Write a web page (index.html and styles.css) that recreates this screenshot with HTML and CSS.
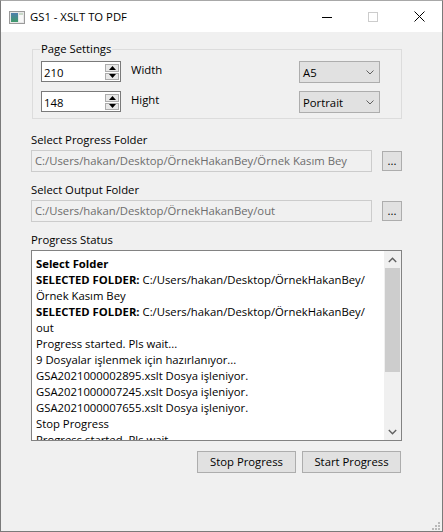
FILE: index.html
```html
<!DOCTYPE html>
<html lang="tr">
<head>
<meta charset="utf-8">
<title>GS1 - XSLT TO PDF</title>
<link rel="stylesheet" href="styles.css">
</head>
<body>
<div class="window">
  <div class="titlebar">
    <svg class="app-icon" width="16" height="13" viewBox="0 0 16 13">
      <defs>
        <linearGradient id="g1" x1="0" y1="0" x2="0" y2="1">
          <stop offset="0" stop-color="#4f7fae"/>
          <stop offset="1" stop-color="#3f9a6a"/>
        </linearGradient>
      </defs>
      <rect x="0.5" y="0.5" width="15" height="12" fill="#e8e8e8" stroke="#9a9a9a"/>
      <rect x="2" y="2" width="7" height="9" fill="url(#g1)"/>
      <rect x="10" y="2" width="4" height="9" fill="#f7f7f7"/>
      <rect x="10" y="2" width="4" height="2" fill="#c9d9c9"/>
    </svg>
    <span class="title">GS1 - XSLT TO PDF</span>
    <div class="caption-buttons">
      <span class="cap"><svg width="10" height="10" viewBox="0 0 10 10"><line x1="0" y1="5.5" x2="10" y2="5.5" stroke="#000" stroke-width="1"/></svg></span>
      <span class="cap"><svg width="10" height="10" viewBox="0 0 10 10"><rect x="0.5" y="0.5" width="9" height="9" fill="none" stroke="#cccccc" stroke-width="1"/></svg></span>
      <span class="cap"><svg width="11" height="11" viewBox="0 0 11 11"><path d="M0.5 0.5 L10.5 10.5 M10.5 0.5 L0.5 10.5" stroke="#000" stroke-width="1" fill="none"/></svg></span>
    </div>
  </div>

  <div class="client">
    <fieldset class="group">
      <legend>Page Settings</legend>
      <div class="settings-grid">
        <div class="spin">
          <span class="spin-value">210</span>
          <span class="spin-btns">
            <span class="spin-btn"><svg width="7" height="4" viewBox="0 0 7 4"><path d="M0 4 L3.5 0 L7 4 Z" fill="#000"/></svg></span>
            <span class="spin-btn"><svg width="7" height="4" viewBox="0 0 7 4"><path d="M0 0 L3.5 4 L7 0 Z" fill="#000"/></svg></span>
          </span>
        </div>
        <span class="field-label">Width</span>
        <div class="combo"><span>A5</span><svg width="8" height="5" viewBox="0 0 8 5"><path d="M0.5 0.5 L4 4 L7.5 0.5" stroke="#606060" fill="none"/></svg></div>

        <div class="spin">
          <span class="spin-value">148</span>
          <span class="spin-btns">
            <span class="spin-btn"><svg width="7" height="4" viewBox="0 0 7 4"><path d="M0 4 L3.5 0 L7 4 Z" fill="#000"/></svg></span>
            <span class="spin-btn"><svg width="7" height="4" viewBox="0 0 7 4"><path d="M0 0 L3.5 4 L7 0 Z" fill="#000"/></svg></span>
          </span>
        </div>
        <span class="field-label">Hight</span>
        <div class="combo"><span>Portrait</span><svg width="8" height="5" viewBox="0 0 8 5"><path d="M0.5 0.5 L4 4 L7.5 0.5" stroke="#606060" fill="none"/></svg></div>
      </div>
    </fieldset>

    <div class="label first">Select Progress Folder</div>
    <div class="path-row">
      <div class="textbox">C:/Users/hakan/Desktop/ÖrnekHakanBey/Örnek Kasım Bey</div>
      <button class="browse">...</button>
    </div>

    <div class="label">Select Output Folder</div>
    <div class="path-row">
      <div class="textbox">C:/Users/hakan/Desktop/ÖrnekHakanBey/out</div>
      <button class="browse">...</button>
    </div>

    <div class="label">Progress Status</div>
    <div class="log">
      <div class="log-text">
        <div class="line"><b>Select Folder</b></div>
        <div class="line"><b>SELECTED FOLDER:</b> C:/Users/hakan/Desktop/ÖrnekHakanBey/</div>
        <div class="line">Örnek Kasım Bey</div>
        <div class="line"><b>SELECTED FOLDER:</b> C:/Users/hakan/Desktop/ÖrnekHakanBey/</div>
        <div class="line">out</div>
        <div class="line">Progress started. Pls wait...</div>
        <div class="line">9 Dosyalar işlenmek için hazırlanıyor...</div>
        <div class="line">GSA2021000002895.xslt Dosya işleniyor.</div>
        <div class="line">GSA2021000007245.xslt Dosya işleniyor.</div>
        <div class="line">GSA2021000007655.xslt Dosya işleniyor.</div>
        <div class="line">Stop Progress</div>
        <div class="line">Progress started. Pls wait...</div>
      </div>
      <div class="scrollbar">
        <span class="sb-arrow"><svg width="9" height="6" viewBox="0 0 9 6"><path d="M0.8 5 L4.5 1.3 L8.2 5" stroke="#606060" stroke-width="1.4" fill="none"/></svg></span>
        <span class="sb-track"><span class="sb-thumb"></span></span>
        <span class="sb-arrow"><svg width="9" height="6" viewBox="0 0 9 6"><path d="M0.8 1 L4.5 4.7 L8.2 1" stroke="#606060" stroke-width="1.4" fill="none"/></svg></span>
      </div>
    </div>

    <div class="actions">
      <button class="btn">Stop Progress</button>
      <button class="btn">Start Progress</button>
    </div>
  </div>

  <svg class="grip" width="8" height="8" viewBox="0 0 8 8">
    <rect x="6" y="0" width="2" height="2" fill="#b9b9b9"/>
    <rect x="3" y="3" width="2" height="2" fill="#b9b9b9"/>
    <rect x="6" y="3" width="2" height="2" fill="#b9b9b9"/>
    <rect x="0" y="6" width="2" height="2" fill="#b9b9b9"/>
    <rect x="3" y="6" width="2" height="2" fill="#b9b9b9"/>
    <rect x="6" y="6" width="2" height="2" fill="#b9b9b9"/>
  </svg>
</div>
</body>
</html>
```

FILE: styles.css
```css
* {
  box-sizing: border-box;
}

html, body {
  margin: 0;
  padding: 0;
  background: #ffffff;
}

.window {
  position: relative;
  width: 443px;
  height: 532px;
  border: 1px solid #7a7a7a;
  border-top-color: #a8a8a8;
  background: #f0f0f0;
  display: flex;
  flex-direction: column;
  font-family: "Open Sans", "Noto Sans", sans-serif;
  font-size: 11.3px;
  color: #000;
}

.titlebar {
  height: 31px;
  flex: none;
  background: #ffffff;
  display: flex;
  align-items: center;
}

.app-icon {
  display: block;
  margin-left: 8px;
  margin-top: 1px;
}

.title {
  margin-left: 5px;
  font-size: 11.3px;
  line-height: 16px;
}

.caption-buttons {
  margin-left: auto;
  height: 100%;
  display: flex;
}

.cap {
  width: 46px;
  height: 100%;
  display: flex;
  align-items: center;
  justify-content: center;
}

.cap svg {
  display: block;
}

.client {
  flex: 1;
  padding: 9px 40px 0 30px;
  display: flex;
  flex-direction: column;
}

.group {
  margin: 0 0 0 1px;
  padding: 4px 21px 6px 8px;
  border: 1px solid #dcdcdc;
  min-width: 0;
}

.group legend {
  padding: 0 1px;
  margin-left: -1px;
  line-height: 16px;
}

.settings-grid {
  display: grid;
  grid-template-columns: 80px 1fr 81px;
  grid-auto-rows: 21px;
  column-gap: 10px;
  row-gap: 9px;
  align-items: start;
}

.spin {
  height: 21px;
  border: 1px solid #7a7a7a;
  background: #ffffff;
  display: flex;
}

.spin-value {
  flex: 1;
  padding-left: 2px;
  line-height: 19px;
  padding-top: 1px;
}

.spin-btns {
  width: 14px;
  margin: 2px 1px 1px 0;
  display: flex;
  flex-direction: column;
  gap: 1px;
}

.spin-btn {
  flex: 1;
  border: 1px solid #acacac;
  background: #e8e8e8;
  display: flex;
  align-items: center;
  justify-content: center;
}

.spin-btn svg {
  display: block;
}

.field-label {
  line-height: 18px;
}

.combo {
  height: 22px;
  border: 1px solid #adadad;
  background: #e1e1e1;
  display: flex;
  align-items: center;
  justify-content: space-between;
  padding: 0 5px 0 3px;
}

.combo svg {
  display: block;
}

.label {
  margin-top: 9px;
  padding-top: 1px;
  line-height: 16px;
}

.label.first {
  margin-top: 12px;
}

.path-row {
  margin-top: 2px;
  display: flex;
  align-items: center;
  gap: 10px;
}

.textbox {
  flex: 1;
  height: 22px;
  border: 1px solid #cccccc;
  background: #f0f0f0;
  color: #6d6d6d;
  padding: 0 3px;
  line-height: 20px;
  white-space: nowrap;
  overflow: hidden;
}

.browse {
  width: 20px;
  height: 20px;
  margin: 0;
  padding: 0;
  border: 1px solid #adadad;
  background: #e1e1e1;
  font: inherit;
  line-height: 18px;
  color: #000;
}

.log {
  margin-top: 2px;
  height: 191px;
  border: 1px solid #828282;
  background: #ffffff;
  display: flex;
  overflow: hidden;
}

.log-text {
  flex: 1;
  min-width: 0;
  padding: 5px 0 0 4px;
  overflow: hidden;
}

.line {
  line-height: 16px;
  white-space: nowrap;
}

.line b {
  font-weight: 700;
}

.scrollbar {
  width: 17px;
  flex: none;
  background: #f0f0f0;
  display: flex;
  flex-direction: column;
}

.sb-arrow {
  height: 17px;
  flex: none;
  display: flex;
  align-items: center;
  justify-content: center;
}

.sb-arrow svg {
  display: block;
}

.sb-track {
  flex: 1;
  display: flex;
  flex-direction: column;
}

.sb-thumb {
  height: 104px;
  margin: 0 1px;
  background: #cdcdcd;
}

.actions {
  margin-top: 10px;
  padding-right: 1px;
  display: flex;
  justify-content: flex-end;
  gap: 6px;
}

.btn {
  width: 99px;
  height: 22px;
  margin: 0;
  padding: 0;
  border: 1px solid #adadad;
  background: #e1e1e1;
  font: inherit;
  color: #000;
  line-height: 20px;
}

.grip {
  position: absolute;
  right: 2px;
  bottom: 1px;
  display: block;
}
```
